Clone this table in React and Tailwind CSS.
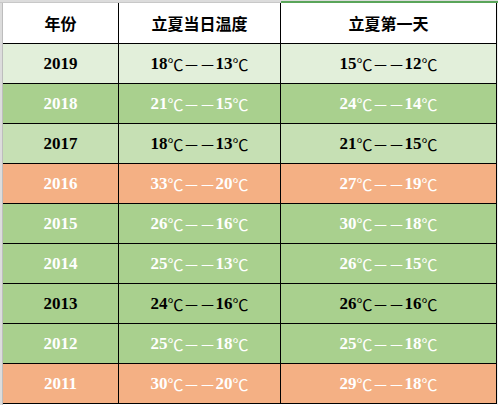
import React from "react";

const rows = [
  { y: "2019", a: ["18", "13"], b: ["15", "12"], bg: "bg-[#e2efda]", fg: "text-black" },
  { y: "2018", a: ["21", "15"], b: ["24", "14"], bg: "bg-[#a9d08e]", fg: "text-white" },
  { y: "2017", a: ["18", "13"], b: ["21", "15"], bg: "bg-[#c6e0b4]", fg: "text-black" },
  { y: "2016", a: ["33", "20"], b: ["27", "19"], bg: "bg-[#f4b084]", fg: "text-white" },
  { y: "2015", a: ["26", "16"], b: ["30", "18"], bg: "bg-[#a9d08e]", fg: "text-white" },
  { y: "2014", a: ["25", "13"], b: ["26", "15"], bg: "bg-[#a9d08e]", fg: "text-white" },
  { y: "2013", a: ["24", "16"], b: ["26", "16"], bg: "bg-[#a9d08e]", fg: "text-black" },
  { y: "2012", a: ["25", "18"], b: ["25", "18"], bg: "bg-[#a9d08e]", fg: "text-white" },
  { y: "2011", a: ["30", "20"], b: ["29", "18"], bg: "bg-[#f4b084]", fg: "text-white" },
];

const serif = { fontFamily: '"Liberation Serif", "DejaVu Serif", serif' };
const cjk = { fontFamily: '"Noto Sans CJK SC", sans-serif' };

function Temp({ v }) {
  return (
    <span className="flex items-center">
      <span className="text-[17px] font-bold" style={serif}>{v[0]}</span>
      <span className="text-[16px] font-normal" style={cjk}>℃</span>
      <span className="text-[16px] font-normal" style={cjk}>－－</span>
      <span className="text-[17px] font-bold" style={serif}>{v[1]}</span>
      <span className="text-[16px] font-normal" style={cjk}>℃</span>
    </span>
  );
}

export default function App() {
  return (
    <div className="w-[498px] h-[405px] bg-white overflow-hidden flex flex-col">
      <div className="flex h-[3px] shrink-0">
        <div className="w-[281px] bg-[#dcdcdc] border-b border-[#c8c8c8]"></div>
        <div className="flex-1 flex flex-col">
          <div className="h-[1px] bg-[#dcdcdc]"></div>
          <div className="h-[2px] bg-[#5aa55a]"></div>
        </div>
      </div>
      <div className="flex flex-1">
        <div className="w-[3px] shrink-0 bg-[#dcdcdc] border-r border-[#bdbdbd]"></div>
        <div className="w-[494px] shrink-0 flex flex-col">
          <div className="flex h-[41px] border-b border-black bg-white text-black font-bold text-[16px]" style={cjk}>
            <div className="w-[116px] border-r border-black flex items-center justify-center">年份</div>
            <div className="w-[162px] border-r border-black flex items-center justify-center">立夏当日温度</div>
            <div className="w-[216px] border-r border-black flex items-center justify-center">立夏第一天</div>
          </div>
          {rows.map((r) => (
            <div key={r.y} className={`flex h-[40px] border-b border-black ${r.bg} ${r.fg}`}>
              <div className="w-[116px] border-r border-black flex items-center justify-center text-[17px] font-bold" style={serif}>{r.y}</div>
              <div className="w-[162px] border-r border-black flex items-center justify-center"><Temp v={r.a} /></div>
              <div className="w-[216px] border-r border-black flex items-center justify-center"><Temp v={r.b} /></div>
            </div>
          ))}
        </div>
        <div className="flex-1 bg-[#f0f0f0]"></div>
      </div>
    </div>
  );
}
